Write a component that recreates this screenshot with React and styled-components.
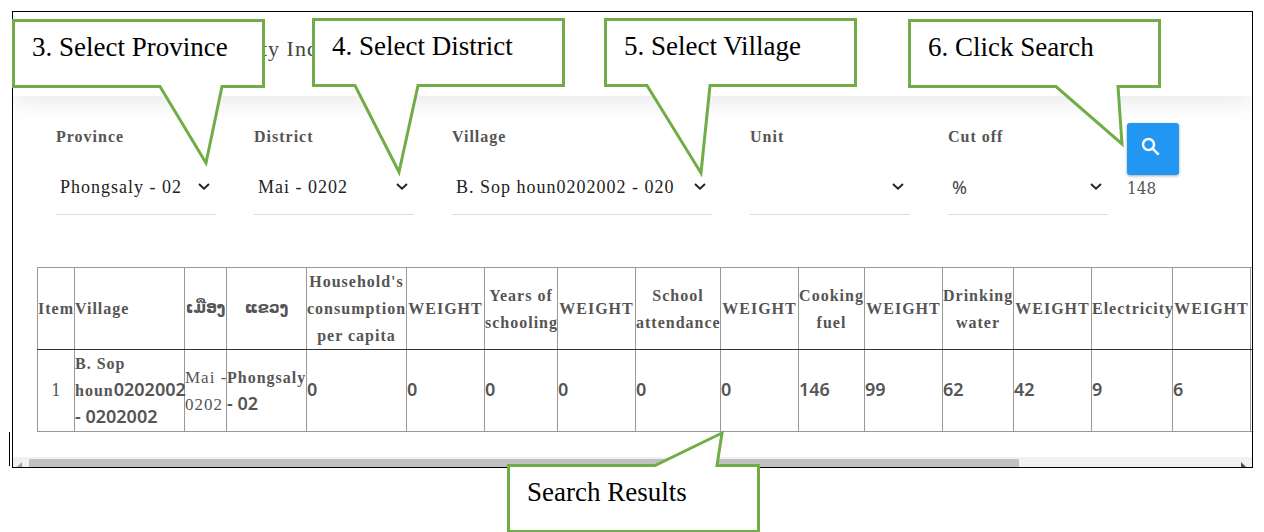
import styled, { createGlobalStyle, css } from "styled-components";

const filters = [
    { id: "province", label: "Province", value: "Phongsaly - 02" },
    { id: "district", label: "District", value: "Mai - 0202" },
    { id: "village", label: "Village", value: "B. Sop houn0202002 - 020" },
    { id: "unit", label: "Unit", value: "" },
    { id: "cutoff", label: "Cut off", value: "%", sans: true },
]

const columns = [
    { title: "Item", width: 37 },
    { title: "Village", width: 110, left: true },
    { title: "ເມືອງ", width: 42, lao: true },
    { title: "ແຂວງ", width: 80, lao: true },
    { title: "Household's\nconsumption\nper capita", width: 100, value: "0" },
    { title: "WEIGHT", width: 78, value: "0" },
    { title: "Years of\nschooling", width: 73, value: "0" },
    { title: "WEIGHT", width: 78, value: "0" },
    { title: "School\nattendance", width: 85, value: "0" },
    { title: "WEIGHT", width: 78, value: "0" },
    { title: "Cooking\nfuel", width: 66, value: "146" },
    { title: "WEIGHT", width: 78, value: "99" },
    { title: "Drinking\nwater", width: 71, value: "62" },
    { title: "WEIGHT", width: 78, value: "42" },
    { title: "Electricity", width: 81, value: "9" },
    { title: "WEIGHT", width: 78, value: "6" },
    { title: "", width: 78, value: "" },
]

// points of each tail, measured from the top left corner of its box
const callouts = [
    { text: "3. Select Province", x: 12, y: 19, tail: "210,67.5 194,144 148,67.5" },
    { text: "4. Select District", x: 312, y: 18, tail: "106,67.5 87,154 43,67.5" },
    { text: "5. Select Village", x: 604, y: 18, tail: "106,67.5 97,155 43,67.5" },
    { text: "6. Click Search", x: 908, y: 19, tail: "210,67.5 214,125 148,67.5" },
    { text: "Search Results", x: 507, y: 464, tail: "148,1.5 215,-31 210,1.5", up: true },
]

function Filter({ id, label, value, sans }) {
    return (
        <Field>
            <Label htmlFor={id}>{label}</Label>
            <SelectBox>
                <Select id={id} defaultValue={value} $sans={sans}>
                    <option value={value}>{value}</option>
                </Select>
                <Chevron viewBox="0 0 12 8" aria-hidden="true">
                    <path d="M1 1 L6 5.8 L11 1" fill="none" stroke="#1d2529" strokeWidth="1.9" />
                </Chevron>
            </SelectBox>
        </Field>
    )
}

function Callout({ text, x, y, tail, up }) {
    const points = up
        ? `1.5,1.5 ${tail} 251.5,1.5 251.5,67.5 1.5,67.5`
        : `1.5,1.5 251.5,1.5 251.5,67.5 ${tail} 1.5,67.5`

    return (
        <CalloutBox $x={x} $y={y}>
            <Bubble viewBox="0 0 253 69" aria-hidden="true">
                <polygon points={points} fill="#fff" stroke="#70ad47" strokeWidth="3" />
            </Bubble>
            <CalloutText>{text}</CalloutText>
        </CalloutBox>
    )
}

function ResultsTable() {
    return (
        <Table>
            <colgroup>
                {columns.map((column, index) => <Col key={index} $width={column.width} />)}
            </colgroup>
            <thead>
                <tr>
                    {columns.map((column, index) => (
                        <Th key={index} scope="col" $left={column.left} $lao={column.lao}>{column.title}</Th>
                    ))}
                </tr>
            </thead>
            <tbody>
                <tr>
                    <Td $center><Digits>1</Digits></Td>
                    <Td $bold>B. Sop<br />houn<BoldDigits>0202002</BoldDigits><br /><BoldDigits>- 0202002</BoldDigits></Td>
                    <Td>Mai -<br />0202</Td>
                    <Td $bold>Phongsaly<br /><BoldDigits>- 02</BoldDigits></Td>
                    {columns.slice(4).map((column, index) => (
                        <Td key={index} $bold><BoldDigits>{column.value}</BoldDigits></Td>
                    ))}
                </tr>
            </tbody>
        </Table>
    )
}

export default function App() {
    return (
        <Page>
            <GlobalStyle />
            <Frame>
                <Header>
                    <Title>ty Ind</Title>
                </Header>
                <FilterBar>
                    <Fields>
                        {filters.map((filter) => <Filter key={filter.id} {...filter} />)}
                    </Fields>
                    <SearchArea>
                        <SearchButton type="button" aria-label="Search">
                            <SearchIcon viewBox="0 0 24 24" aria-hidden="true">
                                <circle cx="9.5" cy="9.5" r="5.5" />
                                <path d="M13.7 13.7 L19.7 19.7" />
                            </SearchIcon>
                        </SearchButton>
                        <Count>148</Count>
                    </SearchArea>
                </FilterBar>
                <TableWrap>
                    <ResultsTable />
                </TableWrap>
                <Scrollbar>
                    <Arrow viewBox="0 0 16 10" aria-hidden="true">
                        <path d="M9 5 V10 H4 Z" fill="#a3a3a3" />
                    </Arrow>
                    <Track><Thumb /></Track>
                    <Arrow viewBox="0 0 16 10" aria-hidden="true">
                        <path d="M5 5 V10 H10 Z" fill="#505050" />
                    </Arrow>
                </Scrollbar>
            </Frame>
            <TextCursor />
            {callouts.map((callout) => <Callout key={callout.text} {...callout} />)}
        </Page>
    )
}

const GlobalStyle = createGlobalStyle`
    * {
        box-sizing: border-box;
    }
    body {
        margin: 0;
        background: #fff;
        font-family: "Liberation Serif", "DejaVu Sans", serif;
        letter-spacing: 1px;
        color: #555;
    }
`

const Page = styled.div`
    position: relative;
    padding: 11px 11px 64px 12px;
`

const Frame = styled.main`
    border: 1px solid #000;
    overflow: hidden;
`

const Header = styled.header`
    display: flex;
    align-items: center;
    height: 84px;
    padding: 0 248px 12px;
    box-shadow: 0 4px 25px rgba(0, 0, 0, 0.1);
`

const Title = styled.h1`
    margin: 0;
    color: #444;
    font-size: 22px;
    font-weight: 400;
    line-height: 27px;
`

const FilterBar = styled.section`
    display: flex;
    padding: 27px 73px 0 43px;
`

const Fields = styled.div`
    flex: 1;
    display: grid;
    grid-template-columns: 8fr 8fr 13fr 8fr 8fr;
    column-gap: 38px;
`

const Field = styled.div`
    display: flex;
    flex-direction: column;
    min-width: 0;
    gap: 10px;
`

const Label = styled.label`
    font-size: 16px;
    font-weight: 700;
    line-height: 27px;
`

const SelectBox = styled.div`
    display: grid;
    align-items: center;
    height: 55px;
    border-bottom: 1px solid #ddd;
`

const Select = styled.select`
    grid-area: 1 / 1;
    width: 100%;
    height: 100%;
    padding: 0 4px;
    border: none;
    background: transparent;
    appearance: none;
    color: #222;
    font-family: inherit;
    font-size: 18px;
    letter-spacing: inherit;
    ${props => props.$sans && css`
        color: #444;
        font-family: "Noto Sans", sans-serif;
    `}
`

const Chevron = styled.svg`
    grid-area: 1 / 1;
    justify-self: end;
    width: 12px;
    height: 8px;
    margin-right: 6px;
    pointer-events: none;
`

const SearchArea = styled.div`
    display: flex;
    flex-direction: column;
    width: 52px;
    margin-left: 19px;
`

const SearchButton = styled.button`
    display: flex;
    width: 52px;
    height: 52px;
    padding: 12px;
    border: none;
    border-radius: 3px;
    background: #2196f3;
    color: #fff;
    box-shadow: 0 1px 3px rgba(0, 0, 0, 0.35);
    cursor: pointer;
`

const SearchIcon = styled.svg`
    width: 24px;
    height: 24px;
    fill: none;
    stroke: currentColor;
    stroke-width: 2.5;
`

const Digits = styled.span`
    font-family: "DejaVu Serif Condensed", "DejaVu Serif", serif;
    font-size: 17px;
    font-weight: 400;
    font-stretch: condensed;
    line-height: 1;
    letter-spacing: 0;
`

const BoldDigits = styled(Digits)`
    font-family: "Noto Sans", sans-serif;
    font-size: 18px;
    font-weight: 600;
    font-stretch: normal;
`

const Count = styled(Digits)`
    line-height: 27px;
`

const TableWrap = styled.div`
    padding: 52px 0 25px 24px;
    overflow: hidden;
`

const Table = styled.table`
    width: 1291px;
    table-layout: fixed;
    border-collapse: collapse;
    line-height: 27px;
`

const Col = styled.col`
    width: ${props => props.$width}px;
`

const Th = styled.th`
    padding: 0;
    border: 1px solid #999;
    border-bottom-color: #333;
    font-size: 16px;
    text-align: ${props => props.$left ? "left" : "center"};
    white-space: pre;
    ${props => props.$lao && css`
        font-size: 15px;
        letter-spacing: 0;
    `}
`

const Td = styled.td`
    height: 82px;
    padding: 0;
    border: 1px solid #999;
    font-size: ${props => props.$bold ? "16px" : "17px"};
    font-weight: ${props => props.$bold ? 700 : 400};
    text-align: ${props => props.$center ? "center" : "left"};
    white-space: nowrap;
`

const Scrollbar = styled.div`
    display: flex;
    height: 10px;
    background: #f1f1f1;
`

const Arrow = styled.svg`
    width: 16px;
    height: 10px;
`

const Track = styled.div`
    flex: 1;
    padding-top: 2px;
`

const Thumb = styled.div`
    width: 82%;
    height: 8px;
    background: #c1c1c1;
`

const TextCursor = styled.span`
    position: absolute;
    left: 9px;
    top: 432px;
    width: 1px;
    height: 34px;
    background: #000;
`

const CalloutBox = styled.div`
    position: absolute;
    left: ${props => props.$x}px;
    top: ${props => props.$y}px;
    width: 253px;
    height: 69px;
    padding: 13px 20px;
`

const Bubble = styled.svg`
    position: absolute;
    inset: 0;
    width: 100%;
    height: 100%;
    overflow: visible;
`

const CalloutText = styled.span`
    position: relative;
    color: #000;
    font-size: 27px;
    line-height: 31px;
    letter-spacing: 0;
    white-space: nowrap;
`
